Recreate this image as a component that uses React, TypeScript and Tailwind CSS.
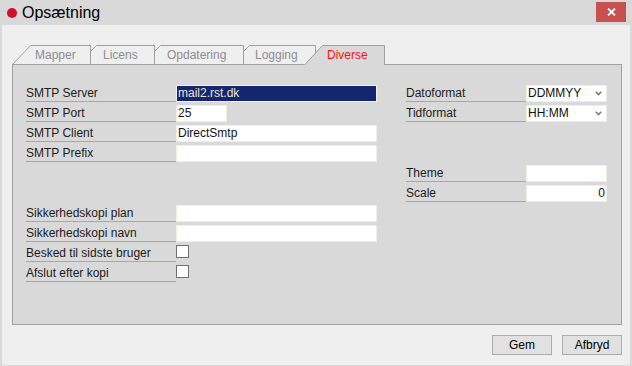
import React from "react";

const FONT = { fontFamily: '"Liberation Sans", Arial, sans-serif' };

function Label({ text, w }: { text: string; w: string }) {
  return (
    <div className={`${w} h-[17px] border-b border-[#a8a8a8] text-[12px] leading-[15px] pt-[1px] text-[#1c1c1c] whitespace-nowrap`}>
      {text}
    </div>
  );
}

function Field({ w, value, selected, right }: { w: string; value?: string; selected?: boolean; right?: boolean }) {
  return (
    <div
      className={`${w} h-[17px] border text-[12px] leading-[15px] px-[1px] whitespace-nowrap ${
        selected ? "bg-[#16256f] border-[#f2f2ee] text-[#e6e6d6]" : "bg-white border-[#f1eedc] text-[#111]"
      } ${right ? "text-right" : ""}`}
    >
      {value}
    </div>
  );
}

function SelectField({ value }: { value: string }) {
  return (
    <div className="w-[81px] h-[17px] border border-[#f1eedc] bg-white text-[12px] leading-[15px] px-[1px] flex items-center justify-between text-[#111]">
      <span>{value}</span>
      <svg width="7" height="5" viewBox="0 0 7 5" className="mr-[3px]">
        <path d="M0.8 0.8 L3.5 3.6 L6.2 0.8" fill="none" stroke="#777" strokeWidth="1.5" />
      </svg>
    </div>
  );
}

function Checkbox() {
  return <div className="w-[13px] h-[13px] border border-[#707070] bg-white" />;
}

function Row({ children }: { children: React.ReactNode }) {
  return <div className="flex h-[17px] mb-[3px]">{children}</div>;
}

export default function App() {
  const tabs = [
    { t: "Mapper", w: "w-[79px]", pl: "pl-[23px]", sel: false },
    { t: "Licens", w: "w-[64px]", pl: "pl-[12px]", sel: false },
    { t: "Opdatering", w: "w-[89px]", pl: "pl-[12px]", sel: false },
    { t: "Logging", w: "w-[61px]", pl: "pl-[11px]", sel: false },
    { t: "Diverse", w: "w-[80px]", pl: "pl-[22px]", sel: true },
  ];
  return (
    <div className="w-[632px] h-[366px] bg-[#d9d9d9] flex flex-col" style={FONT}>
      <div className="h-[25px] flex items-start shrink-0">
        <span className="mt-[8px] ml-[7px] w-[10px] h-[10px] rounded-full bg-[#cf0f2c]" />
        <span className="ml-[5px] mt-[3px] text-[16px] leading-[19px] text-black">Opsætning</span>
        <div className="ml-auto mr-[6px] mt-[2px] w-[30px] h-[20px] bg-[#c75050] flex items-center justify-center">
          <svg width="9" height="8" viewBox="0 0 9 8">
            <path d="M1 0.5 L8 7.5 M8 0.5 L1 7.5" stroke="#fff" strokeWidth="1.8" />
          </svg>
        </div>
      </div>
      <div className="mx-[2px] mb-[1px] flex-1 bg-[#efefef] pl-[10px] pr-[8px] pt-[20px] flex flex-col">
        <div className="relative w-[610px] h-[20px] flex">
          <svg className="absolute left-0 top-0" width="610" height="20" viewBox="0 0 610 20">
            <path d="M0.5 19.5 L18.5 0.5 L78.5 0.5 L78.5 19.5" fill="#efefef" stroke="#a0a0a0" />
            <path d="M78.5 19.5 L78.5 6.5 L84.5 0.5 L142.5 0.5 L142.5 19.5" fill="#efefef" stroke="#a0a0a0" />
            <path d="M142.5 19.5 L142.5 6.5 L148.5 0.5 L231.5 0.5 L231.5 19.5" fill="#efefef" stroke="#a0a0a0" />
            <path d="M231.5 19.5 L231.5 6.5 L237.5 0.5 L303.5 0.5 L303.5 19.5" fill="#efefef" stroke="#a0a0a0" />
            <path d="M292 20 L311 0.5 L373 0.5 L373 20 Z" fill="#d9d9d9" />
            <path d="M292.5 20 L310.5 0.5 L372.5 0.5 L372.5 20" fill="none" stroke="#a0a0a0" />
            <path d="M0 19.5 L292.5 19.5 M372.5 19.5 L610 19.5" stroke="#a0a0a0" />
            <path d="M0.5 19 L0.5 20 M609.5 19 L609.5 20" stroke="#a0a0a0" />
          </svg>
          {tabs.map((t) => (
            <div key={t.t} className={`relative ${t.w} ${t.pl} h-[19px] text-[12px] leading-[18px] pt-[1px] ${t.sel ? "text-[#ff1010]" : "text-[#8d8d93]"}`}>
              {t.t}
            </div>
          ))}
        </div>
        <div className="w-[610px] h-[260px] bg-[#d9d9d9] border-l border-r border-b border-[#a0a0a0] flex pl-[13px] pt-[20px]">
          <div className="w-[380px]">
            <Row><Label text="SMTP Server" w="w-[150px]" /><Field w="w-[201px]" value="mail2.rst.dk" selected /></Row>
            <Row><Label text="SMTP Port" w="w-[150px]" /><Field w="w-[51px]" value="25" /></Row>
            <Row><Label text="SMTP Client" w="w-[150px]" /><Field w="w-[201px]" value="DirectSmtp" /></Row>
            <Row><Label text="SMTP Prefix" w="w-[150px]" /><Field w="w-[201px]" /></Row>
            <div className="h-[40px]" />
            <Row><Label text="Sikkerhedskopi plan" w="w-[150px]" /><Field w="w-[201px]" /></Row>
            <Row><Label text="Sikkerhedskopi navn" w="w-[150px]" /><Field w="w-[201px]" /></Row>
            <Row><Label text="Besked til sidste bruger" w="w-[150px]" /><Checkbox /></Row>
            <Row><Label text="Afslut efter kopi" w="w-[150px]" /><Checkbox /></Row>
          </div>
          <div className="w-[201px]">
            <Row><Label text="Datoformat" w="w-[120px]" /><SelectField value="DDMMYY" /></Row>
            <Row><Label text="Tidformat" w="w-[120px]" /><SelectField value="HH:MM" /></Row>
            <div className="h-[40px]" />
            <Row><Label text="Theme" w="w-[120px]" /><Field w="w-[81px]" /></Row>
            <Row><Label text="Scale" w="w-[120px]" /><Field w="w-[81px]" value="0" right /></Row>
          </div>
        </div>
        <div className="mt-[10px] flex justify-end gap-[10px]">
          <button className="w-[60px] h-[20px] bg-[#e1e1e1] border border-[#adadad] text-[12px] leading-[18px] text-black">Gem</button>
          <button className="w-[60px] h-[20px] bg-[#e1e1e1] border border-[#adadad] text-[12px] leading-[18px] text-black">Afbryd</button>
        </div>
      </div>
    </div>
  );
}
